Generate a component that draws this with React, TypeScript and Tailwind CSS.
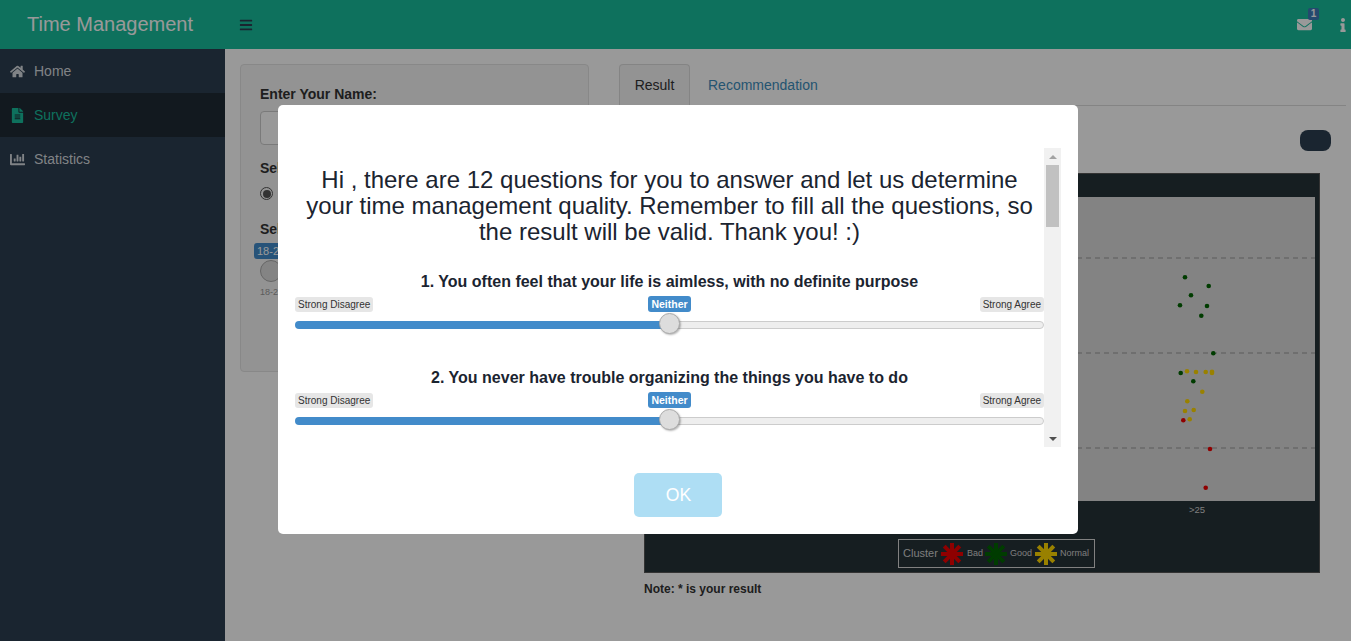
import { FaBars, FaChartBar, FaEnvelope, FaFileAlt, FaHome, FaInfo } from "react-icons/fa";

const green = [[1185, 277.3], [1208.7, 286], [1191, 295.3], [1180, 305.3], [1207, 306], [1201.3, 315.7], [1213.3, 353.3], [1180.7, 373], [1193.3, 381.3]];
const yellow = [[1187, 371.3], [1196, 372], [1205.7, 372], [1212, 371.7], [1212, 373], [1202.3, 391.7], [1187.3, 401.3], [1193.7, 410], [1185, 411], [1189.7, 419.3]];
const red = [[1183.3, 420.3], [1210, 449], [1205.7, 487.7]];

const Star = ({ color }: { color: string }) => (
  <svg width="22" height="22" viewBox="0 0 22 22" className="shrink-0">
    <g stroke={color} strokeWidth="4" strokeLinecap="butt">
      <line x1="11" y1="0" x2="11" y2="22" />
      <line x1="0" y1="11" x2="22" y2="11" />
      <line x1="3.2" y1="3.2" x2="18.8" y2="18.8" />
      <line x1="3.2" y1="18.8" x2="18.8" y2="3.2" />
    </g>
  </svg>
);

const Question = ({ text }: { text: string }) => (
  <div className="mb-[35px]">
    <h4 className="text-center text-[16px] leading-[18px] font-bold text-[#1b2430] mb-[5px]">{text}</h4>
    <div className="grid grid-cols-[1fr_auto_1fr] items-center h-4 text-[10px] leading-[16px]">
      <span className="justify-self-start bg-[#e6e6e6] text-[#333] rounded-[3px] px-[3px] h-[15px] leading-[15px]">Strong Disagree</span>
      <span className="bg-[#428bca] text-white font-bold rounded-[3px] px-[3px] h-4 text-[10.5px]">Neither</span>
      <span className="justify-self-end bg-[#e6e6e6] text-[#333] rounded-[3px] px-[3px] h-[15px] leading-[15px]">Strong Agree</span>
    </div>
    <div className="relative h-[21px] mt-[1px] flex items-center">
      <div className="flex w-full h-2 mt-[3px]">
        <div className="w-1/2 bg-[#428bca] rounded-l-full" />
        <div className="w-1/2 bg-[#eeeeee] border border-[#cccccc] rounded-r-full" />
      </div>
      <div className="absolute left-[364px] top-0 w-[21px] h-[21px] rounded-full bg-[#dddddd] border border-[#aaaaaa] shadow-[1px_1px_2px_rgba(0,0,0,0.3)]" />
    </div>
  </div>
);

export default function App() {
  return (
    <div className="h-screen overflow-hidden bg-white font-['Liberation_Sans',Arial,sans-serif] text-[14px] text-[#333]">
      <header className="h-[49px] bg-[#18bc9c] flex items-center text-white">
        <div className="w-[225px] pl-[27px] pb-[2px] text-[20px]">Time Management</div>
        <FaBars className="ml-[14px] text-[#2c3e50] text-[14px]" />
        <div className="ml-auto flex items-center pr-[1px]">
          <div className="relative mr-[24px]">
            <FaEnvelope className="text-[15px]" />
            <span className="absolute left-[11px] top-[-9px] w-[11px] h-[12px] rounded-[2px] bg-[#3c7ab8] text-[10px] leading-[12px] text-center font-bold">1</span>
          </div>
          <FaInfo className="text-[14px]" />
        </div>
      </header>

      <div className="flex h-[592px]">
        <aside className="w-[225px] bg-[#2c3e50] text-[#d6dbdf]">
          <div className="h-11 flex items-center pl-[10px]">
            <span className="w-[24px]"><FaHome className="text-[15px]" /></span>
            <span>Home</span>
          </div>
          <div className="h-11 flex items-center pl-[10px] bg-[#1e2a35] text-[#18bc9c]">
            <span className="w-[24px]"><FaFileAlt className="text-[15px]" /></span>
            <span>Survey</span>
          </div>
          <div className="h-11 flex items-center pl-[10px]">
            <span className="w-[24px]"><FaChartBar className="text-[15px]" /></span>
            <span>Statistics</span>
          </div>
        </aside>

        <main className="flex-1 flex items-start pt-[15px] pl-[15px]">
          <div className="w-[349px] h-[308px] bg-[#f5f5f5] border border-[#e3e3e3] rounded-[4px] pt-[19px] px-[19px] font-bold">
            <div>Enter Your Name:</div>
            <div className="h-[34px] mt-[6px] bg-white border border-[#cccccc] rounded-[4px]" />
            <div className="mt-[13px]">Select Your Gender:</div>
            <div className="mt-[4px] flex items-center font-normal">
              <span className="w-[13px] h-[13px] rounded-full border border-[#555] flex items-center justify-center">
                <span className="w-[8px] h-[8px] rounded-full bg-[#555]" />
              </span>
              <span className="ml-[6px]">Male</span>
            </div>
            <div className="mt-[15px]">Select Your Age:</div>
            <div className="-ml-[6px] mt-[3px] w-fit bg-[#428bca] text-white text-[11px] font-normal rounded-[3px] px-[3px] h-4 leading-[16px]">18-24</div>
            <div className="mt-[1px] w-[22px] h-[22px] rounded-full bg-[#dddddd] border border-[#aaaaaa]" />
            <div className="mt-[4px] text-[9px] font-normal text-[#999]">18-24</div>
          </div>

          <div className="ml-[30px] w-[727px]">
            <div className="flex h-[42px] border-b border-[#dddddd]">
              <div className="w-[71px] h-[42px] bg-[#f5f5f5] border border-[#dddddd] border-b-white rounded-t-[4px] flex items-center justify-center">Result</div>
              <div className="ml-[18px] h-[41px] pt-[2px] flex items-center text-[#3c8dbc]">Recommendation</div>
            </div>
            <div className="flex justify-end pr-[15px] mt-[24px]">
              <div className="w-[31px] h-[21px] rounded-[8px] bg-[#2c3e50]" />
            </div>
            <div className="ml-[25px] mt-[22px] w-[676px] h-[400px] bg-[#263238] border border-[#555] flex flex-col">
              <svg width="670" height="304" viewBox="645 197 670 304" className="mt-[23px] shrink-0 bg-[#dbdbdb]">
                {[258, 353, 448].map((y) => (
                  <line key={y} x1="645" y1={y} x2="1315" y2={y} stroke="#999999" strokeWidth="1" strokeDasharray="5 4" />
                ))}
                {green.map(([x, y], i) => <circle key={"g" + i} cx={x} cy={y} r="2.3" fill="#006400" />)}
                {yellow.map(([x, y], i) => <circle key={"y" + i} cx={x} cy={y} r="2.3" fill="#ffd700" />)}
                {red.map(([x, y], i) => <circle key={"r" + i} cx={x} cy={y} r="2.3" fill="#ee0000" />)}
              </svg>
              <div className="w-full h-[38px] pl-[544px] pt-[3px] text-[9.5px] text-[#d0d0d0] leading-[12px]">&gt;25</div>
              <div className="ml-[253px] flex items-center h-[29px] w-[197px] border border-[#d8d8d8] pl-[4px] text-[#d0d0d0]">
                <span className="text-[11px] w-[38px]">Cluster</span>
                <Star color="#ee0000" />
                <span className="ml-[4px] w-[18px] text-[9px]">Bad</span>
                <Star color="#006400" />
                <span className="ml-[3px] w-[25px] text-[9px]">Good</span>
                <Star color="#ffd700" />
                <span className="ml-[3px] text-[9px]">Normal</span>
              </div>
            </div>
            <div className="ml-[25px] mt-[7px] text-[12px] font-bold">Note: * is your result</div>
          </div>
        </main>
      </div>

      <div className="fixed inset-0 bg-black/40 flex justify-center pl-[5px] pt-[105px]">
        <div className="w-[800px] h-[429px] bg-white rounded-[5px] flex flex-col items-center">
          <div className="mt-[43px] w-[766px] h-[299px] flex overflow-hidden">
            <div className="w-[749px] h-full overflow-hidden pt-[19px]">
              <h2 className="text-center text-[24px] leading-[26px] text-[#1b2430] mb-[28px]">
                Hi , there are 12 questions for you to answer and let us determine your time management quality. Remember to fill all the questions, so the result will be valid. Thank you! :)
              </h2>
              <Question text="1. You often feel that your life is aimless, with no definite purpose" />
              <Question text="2. You never have trouble organizing the things you have to do" />
            </div>
            <div className="w-[17px] h-full bg-[#f1f1f1] flex flex-col items-center">
              <div className="h-[17px] flex items-center">
                <div className="border-x-[4px] border-x-transparent border-b-[4px] border-b-[#a3a3a3]" />
              </div>
              <div className="w-[13px] h-[62px] bg-[#c1c1c1]" />
              <div className="mt-auto h-[17px] flex items-center">
                <div className="border-x-[4px] border-x-transparent border-t-[4px] border-t-[#505050]" />
              </div>
            </div>
          </div>
          <button className="mt-[26px] w-[88px] h-[44px] pl-[1px] rounded-[5px] bg-[#aedef4] text-white text-[17.6px]">OK</button>
        </div>
      </div>
    </div>
  );
}
